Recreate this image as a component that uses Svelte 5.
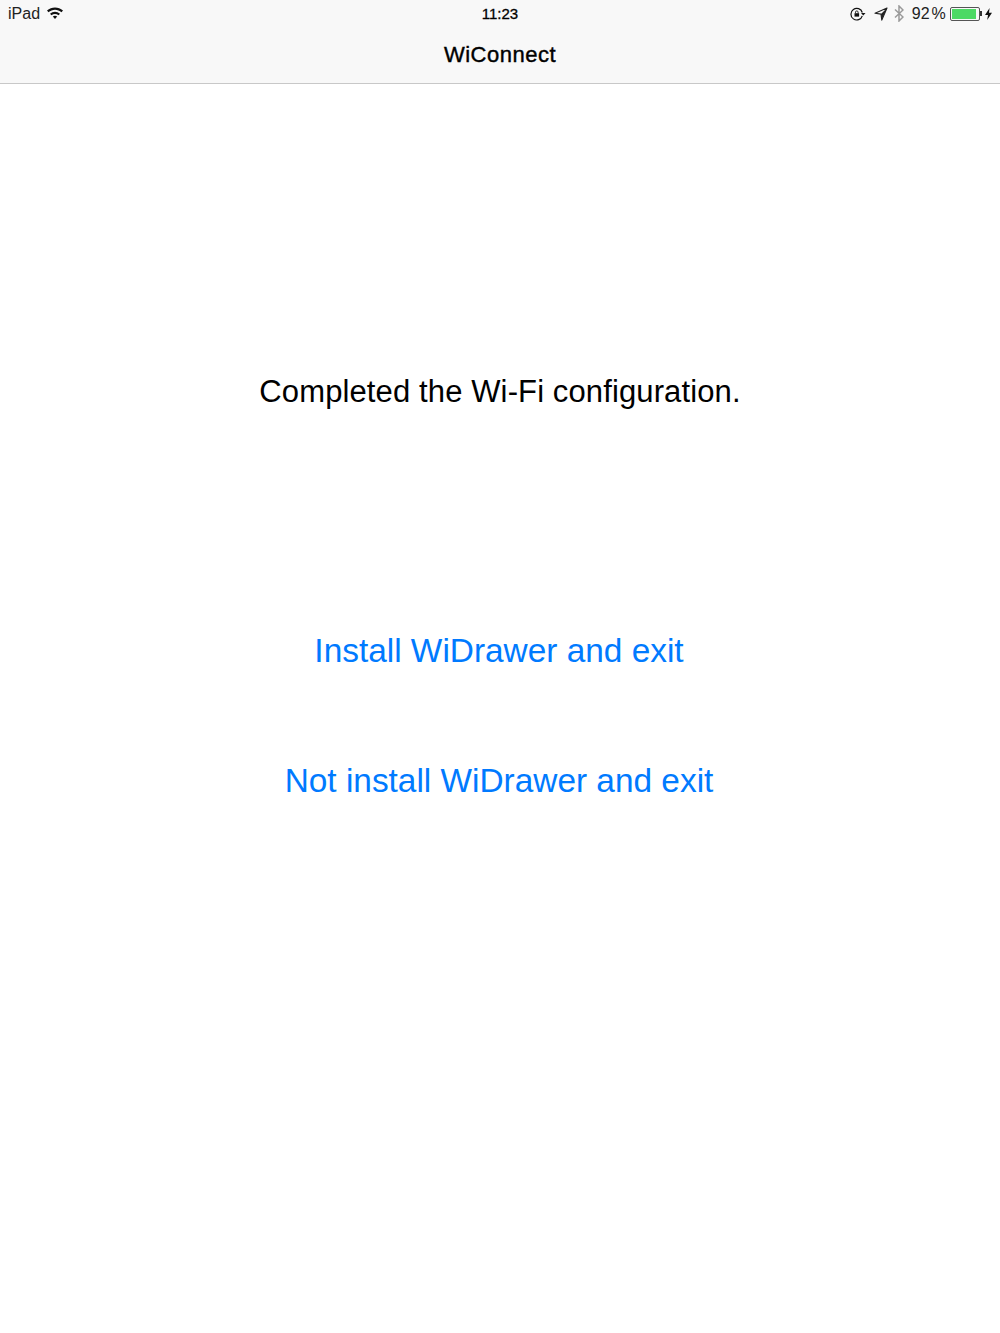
<script lang="ts">
  const actions = ["Install WiDrawer and exit", "Not install WiDrawer and exit"];
</script>

<div class="page">
  <header class="bar">
    <div class="status">
      <div class="left">
        <span>iPad</span>
        <svg class="wifi" width="18" height="13" viewBox="0 0 18 13">
          <path d="M1 4.600C5.600.4 12.400.4 17 4.600l-1.500 1.600C11.700 2.800 6.300 2.800 2.500 6.200z" />
          <path d="M4 7.700c3-2.700 7-2.700 10 0l-1.500 1.600c-2.100-1.800-4.900-1.800-7 0z" />
          <path d="M6.800 10.500c1.300-1.100 3.100-1.100 4.400 0L9 13z" />
        </svg>
      </div>
      <div class="time">11:23</div>
      <div class="right">
        <svg class="lock" width="16" height="14" viewBox="0 0 16 14">
          <path d="M12.300 5.500A5.800 5.800 0 1 0 12.300 8.800" fill="none" stroke="#111" stroke-width="1.200" />
          <path d="M11 6h4.500l-2.200 2.400z" fill="#111" />
          <rect x="4.500" y="6.200" width="4.600" height="3.400" fill="#111" />
          <path d="M5.500 6.200V5.200a1.300 1.300 0 0 1 2.600 0v1" fill="none" stroke="#111" stroke-width="0.900" />
        </svg>
        <svg class="arrow" width="14" height="14" viewBox="0 0 14 14">
          <path d="M13 1L1 6.300l6 .8.800 6z" fill="none" stroke="#222" stroke-width="1.100" stroke-linejoin="round" />
          <path d="M13 1L7 7.100l.8 6z" fill="#222" />
        </svg>
        <svg class="bt" width="10" height="17" viewBox="0 0 10 17">
          <path d="M1 4.500l8 7.500-4 4V1l4 4-8 7.500" fill="none" stroke="#9a9a9a" stroke-width="1.500" />
        </svg>
        <span class="pct">92 %</span>
        <div class="battery">
          <div class="shell"><div class="fill" style="width: 92%"></div></div>
          <div class="nub"></div>
        </div>
        <svg class="bolt" width="7" height="12" viewBox="0 0 7 12">
          <path d="M4.600 0L0 7h3l-.8 5L7 4.800H4z" fill="#111" />
        </svg>
      </div>
    </div>
    <div class="title">WiConnect</div>
  </header>

  <main>
    <p class="message">Completed the Wi-Fi configuration.</p>
    <div class="actions">
      {#each actions as label}
        <button type="button">{label}</button>
      {/each}
    </div>
  </main>
</div>

<style>
  :global(body) {
    background: #fff;
    font-family: "Liberation Sans", Arial, sans-serif;
  }
  .page {
    min-height: 1333px;
    display: flex;
    flex-direction: column;
  }
  .bar {
    height: 83px;
    background: #f8f8f8;
    border-bottom: 1px solid #c8c8c8;
    padding: 0 8px;
    color: #000;
  }
  .status {
    height: 27px;
    display: grid;
    grid-template-columns: 1fr auto 1fr;
    align-items: center;
    font-size: 16px;
  }
  .left {
    display: flex;
    align-items: center;
    gap: 6px;
    color: #222;
  }
  .wifi {
    fill: #111;
    margin-top: -2px;
  }
  .time {
    font-size: 15px;
    -webkit-text-stroke: 0.3px #000;
  }
  .right {
    display: flex;
    align-items: center;
    justify-content: flex-end;
    color: #222;
  }
  .lock {
    margin-right: 1px;
  }
  .arrow {
    margin-left: 7px;
    margin-right: 1px;
  }
  .bt {
    margin-left: 5px;
    margin-right: 1px;
  }
  .pct {
    margin-left: 7px;
    word-spacing: -3px;
    letter-spacing: 0.2px;
  }
  .battery {
    display: flex;
    align-items: center;
    margin-left: 4px;
  }
  .shell {
    width: 30px;
    height: 14px;
    box-sizing: border-box;
    border: 1px solid #555;
    border-radius: 2px;
    padding: 1px;
  }
  .fill {
    height: 100%;
    background: #4cd964;
  }
  .nub {
    width: 2px;
    height: 5px;
    background: #333;
  }
  .bolt {
    margin-left: 3px;
  }
  .title {
    text-align: center;
    font-size: 22px;
    letter-spacing: 0.5px;
    -webkit-text-stroke: 0.4px #000;
    line-height: 26px;
    margin-top: 15px;
  }
  main {
    flex: 1;
    display: flex;
    flex-direction: column;
    align-items: center;
    padding-top: 289px;
  }
  .message {
    margin: 0;
    font-size: 31px;
    letter-spacing: 0.12px;
    line-height: 38px;
    color: #000;
  }
  .actions {
    margin-top: 221px;
    display: flex;
    flex-direction: column;
    align-items: center;
    gap: 92px;
    padding-right: 2px;
  }
  button {
    border: none;
    background: none;
    padding: 0;
    font: inherit;
    font-size: 33.4px;
    line-height: 38px;
    color: #007aff;
    cursor: pointer;
  }
</style>
